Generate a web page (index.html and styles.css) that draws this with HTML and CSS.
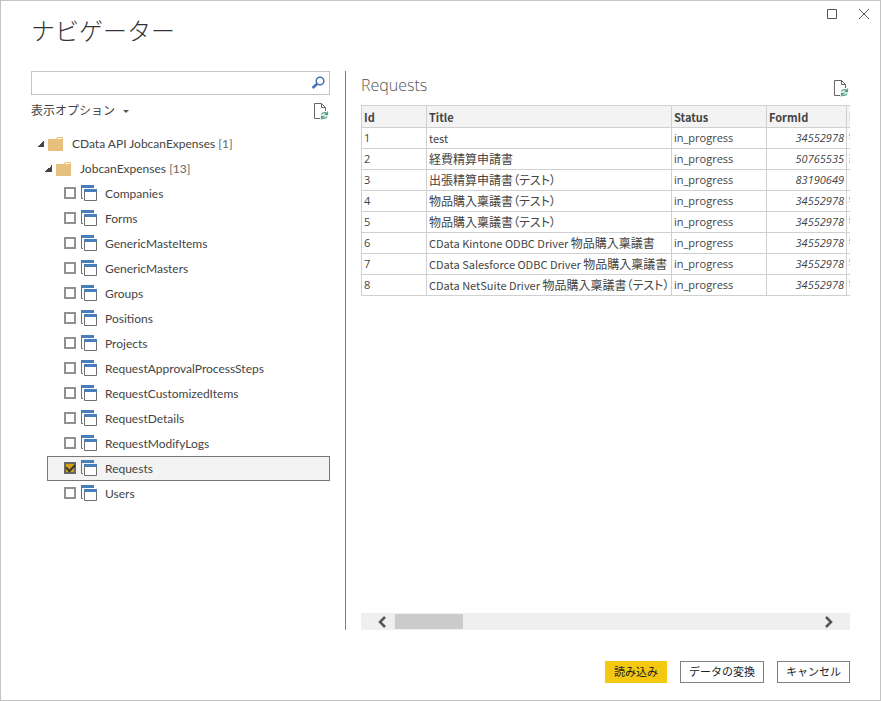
FILE: index.html
```html
<!DOCTYPE html>
<html lang="ja">
<head>
<meta charset="utf-8">
<meta name="viewport" content="width=device-width, initial-scale=1">
<title>ナビゲーター</title>
<link rel="stylesheet" href="styles.css">
</head>
<body>
<svg class="defs" aria-hidden="true">
  <symbol id="folder" viewBox="0 0 16 14">
    <path d="M0 2h7.500l1.500-2h6v14H0z" fill="#e8c07d"/>
    <path d="M9 1.500h5" stroke="#fff"/>
  </symbol>
  <symbol id="table" viewBox="0 0 17 17">
    <path d="M.5 3v10.500H2" fill="none" stroke="#6e6e6e"/>
    <path d="M0 0h13v3H0z" fill="#4a7ebb"/>
    <path d="M3.500 7v8.500h12V7" fill="#fff" stroke="#6e6e6e"/>
    <path d="M3 4h13v3H3z" fill="#4a7ebb"/>
  </symbol>
  <symbol id="refresh" viewBox="0 0 16 17">
    <path d="M6 15.500H.5V.5h7l4 4V8M7.500.5v4h4" fill="none" stroke="#666"/>
    <path d="M7.500 11.500c1-2.300 4-2.500 5.500-.8M13.500 8.500v3h-3M13 13.500c-1 2.300-4 2.500-5.500.8M7.500 16.500v-3h3" fill="none" stroke="#55a283" stroke-width="1.300"/>
  </symbol>
</svg>
<div class="window">
  <header class="titlebar">
    <h1>ナビゲーター</h1>
    <div class="controls">
      <button type="button" aria-label="最大化"><svg width="12" height="12" viewBox="0 0 12 12"><path d="M1.500 1.500h9v9h-9z"/></svg></button>
      <button type="button" aria-label="閉じる"><svg width="12" height="12" viewBox="0 0 12 12"><path d="M1 1l10 10M11 1L1 11"/></svg></button>
    </div>
  </header>

  <main class="panes">
    <section class="browse">
      <div class="search">
        <input type="text" aria-label="検索">
        <button type="button" aria-label="検索する"><svg width="14" height="14" viewBox="0 0 14 14"><circle cx="9" cy="5" r="3.800"/><path class="handle" d="M6.300 7.800L1.500 12"/></svg></button>
      </div>
      <div class="options">
        <button type="button">表示オプション<span class="caret"></span></button>
        <button type="button" aria-label="最新の情報に更新"><svg width="16" height="17"><use href="#refresh"/></svg></button>
      </div>

      <ul class="tree">
        <li>
          <div class="row level-1"><span class="twist"></span><svg width="16" height="14"><use href="#folder"/></svg><span>CData API JobcanExpenses <span class="count">[1]</span></span></div>
          <ul>
            <li>
              <div class="row level-2"><span class="twist"></span><svg width="16" height="14"><use href="#folder"/></svg><span>JobcanExpenses <span class="count">[13]</span></span></div>
              <ul class="items">
                <li><label class="item"><input type="checkbox"><svg width="17" height="17"><use href="#table"/></svg>Companies</label></li>
                <li><label class="item"><input type="checkbox"><svg width="17" height="17"><use href="#table"/></svg>Forms</label></li>
                <li><label class="item"><input type="checkbox"><svg width="17" height="17"><use href="#table"/></svg>GenericMasteItems</label></li>
                <li><label class="item"><input type="checkbox"><svg width="17" height="17"><use href="#table"/></svg>GenericMasters</label></li>
                <li><label class="item"><input type="checkbox"><svg width="17" height="17"><use href="#table"/></svg>Groups</label></li>
                <li><label class="item"><input type="checkbox"><svg width="17" height="17"><use href="#table"/></svg>Positions</label></li>
                <li><label class="item"><input type="checkbox"><svg width="17" height="17"><use href="#table"/></svg>Projects</label></li>
                <li><label class="item"><input type="checkbox"><svg width="17" height="17"><use href="#table"/></svg>RequestApprovalProcessSteps</label></li>
                <li><label class="item"><input type="checkbox"><svg width="17" height="17"><use href="#table"/></svg>RequestCustomizedItems</label></li>
                <li><label class="item"><input type="checkbox"><svg width="17" height="17"><use href="#table"/></svg>RequestDetails</label></li>
                <li><label class="item"><input type="checkbox"><svg width="17" height="17"><use href="#table"/></svg>RequestModifyLogs</label></li>
                <li><label class="item selected"><input type="checkbox" checked><svg width="17" height="17"><use href="#table"/></svg>Requests</label></li>
                <li><label class="item"><input type="checkbox"><svg width="17" height="17"><use href="#table"/></svg>Users</label></li>
              </ul>
            </li>
          </ul>
        </li>
      </ul>
    </section>

    <section class="preview">
      <div class="preview-head">
        <h2>Requests</h2>
        <button type="button" aria-label="プレビューを更新"><svg width="16" height="17"><use href="#refresh"/></svg></button>
      </div>
      <div class="grid">
        <table>
          <colgroup><col class="c-id"><col class="c-title"><col class="c-status"><col class="c-form"><col class="c-name"></colgroup>
          <thead><tr><th>Id</th><th>Title</th><th>Status</th><th>FormId</th><th>F</th></tr></thead>
          <tbody>
            <tr><td>1</td><td><div>test</div></td><td>in_progress</td><td class="num">34552978</td><td class="jp">物</td></tr>
            <tr><td>2</td><td><div><span class="jp">経費精算申請書</span></div></td><td>in_progress</td><td class="num">50765535</td><td class="jp">経</td></tr>
            <tr><td>3</td><td><div><span class="jp">出張精算申請書（テスト）</span></div></td><td>in_progress</td><td class="num">83190649</td><td class="jp">出</td></tr>
            <tr><td>4</td><td><div><span class="jp">物品購入稟議書（テスト）</span></div></td><td>in_progress</td><td class="num">34552978</td><td class="jp">物</td></tr>
            <tr><td>5</td><td><div><span class="jp">物品購入稟議書（テスト）</span></div></td><td>in_progress</td><td class="num">34552978</td><td class="jp">物</td></tr>
            <tr><td>6</td><td><div>CData Kintone ODBC Driver <span class="jp">物品購入稟議書</span></div></td><td>in_progress</td><td class="num">34552978</td><td class="jp">物</td></tr>
            <tr><td>7</td><td><div>CData Salesforce ODBC Driver <span class="jp">物品購入稟議書（テ</span></div></td><td>in_progress</td><td class="num">34552978</td><td class="jp">物</td></tr>
            <tr><td>8</td><td><div>CData NetSuite Driver <span class="jp">物品購入稟議書（テスト）</span></div></td><td>in_progress</td><td class="num">34552978</td><td class="jp">物</td></tr>
          </tbody>
        </table>
      </div>
      <div class="scrollbar">
        <button type="button" aria-label="左へスクロール"><svg width="10" height="12" viewBox="0 0 10 12"><path d="M8 1L3 6l5 5"/></svg></button>
        <div class="track"><div class="thumb"></div></div>
        <button type="button" aria-label="右へスクロール"><svg width="10" height="12" viewBox="0 0 10 12"><path d="M2 1l5 5-5 5"/></svg></button>
      </div>
    </section>
  </main>

  <footer class="actions">
    <button type="button" class="primary">読み込み</button>
    <button type="button">データの変換</button>
    <button type="button">キャンセル</button>
  </footer>
</div>
</body>
</html>
```
FILE: styles.css
```css
* {
  box-sizing: border-box;
}

body {
  margin: 0;
  color: #444;
  background: #fff;
  font: 12px/16px "Open Sans", "Noto Sans CJK JP", sans-serif;
}

h1, h2, ul {
  margin: 0;
  padding: 0;
  list-style: none;
}

button {
  display: flex;
  align-items: center;
  padding: 0;
  border: 0;
  background: none;
  color: inherit;
  font: inherit;
}

svg {
  flex: none;
}

.defs {
  display: none;
}

.window {
  display: flex;
  flex-direction: column;
  min-height: 100vh;
  padding: 0 30px 17px;
  border: 1px solid #c3c3c3;
}

.titlebar {
  display: flex;
  justify-content: space-between;
  align-items: flex-start;
  height: 70px;
}

.titlebar h1 {
  padding-top: 14px;
  color: #333;
  font-size: 24px;
  font-weight: 300;
  line-height: 32px;
}

.controls {
  display: flex;
  gap: 20px;
  margin: 7px -20px 0 0;
}

.controls path {
  fill: none;
  stroke: #555;
}

.panes {
  display: flex;
  flex: 1;
}

.browse {
  flex: none;
  width: 315px;
  padding-right: 15px;
  border-right: 1px solid #808080;
}

.search {
  display: flex;
  height: 24px;
  padding-right: 4px;
  border: 1px solid #c3c3c3;
}

.search input {
  flex: 1;
  min-width: 0;
  border: 0;
  outline: 0;
  font: inherit;
}

.search svg {
  fill: none;
  stroke: #3f72b5;
  stroke-width: 1.5;
}

.search .handle {
  stroke-width: 2.5;
}

.options {
  display: flex;
  justify-content: space-between;
  height: 36px;
  padding-bottom: 4px;
}

.caret {
  margin-left: 8px;
  border: 3px solid transparent;
  border-top-color: #555;
  border-bottom: 0;
}

.tree {
  font-family: Lato, "Open Sans", sans-serif;
}

.row, .item {
  display: flex;
  align-items: center;
  height: 25px;
}

.row svg {
  margin: 0 8px 0 4px;
}

.level-1 {
  padding-left: 6px;
}

.level-2 {
  padding-left: 14px;
}

.twist {
  width: 7px;
  height: 7px;
  background: linear-gradient(135deg, transparent 50%, #444 50%);
}

.count {
  color: #666;
}

.items {
  padding-left: 16px;
}

.item {
  padding-left: 16px;
  border: 1px solid transparent;
}

.item svg {
  margin: 0 7px 0 5px;
}

.item.selected {
  border-color: #777;
  background: #f3f3f3;
}

.item input {
  display: grid;
  place-items: center;
  flex: none;
  width: 12px;
  height: 12px;
  margin: 0 0 1px;
  border: 2px solid #919191;
  background: #fff;
  appearance: none;
}

.item input:checked {
  border-color: #666;
  background: #d2a015;
}

.item input:checked::after {
  content: "";
  width: 7px;
  height: 4px;
  border: solid #333;
  border-width: 0 0 2px 2px;
  transform: translateY(-1px) rotate(-45deg);
}

.preview {
  display: flex;
  flex: 1;
  flex-direction: column;
  min-width: 0;
  padding-left: 15px;
}

.preview-head {
  display: flex;
  justify-content: space-between;
  height: 34px;
}

.preview-head h2 {
  color: #555;
  font-size: 16px;
  font-weight: 300;
  line-height: 28px;
}

.grid {
  flex: 1;
  overflow: hidden;
}

.grid table {
  width: 586px;
  border: 1px solid #d0d0d0;
  border-width: 1px 0 0 1px;
  border-spacing: 0;
  table-layout: fixed;
  font-size: 11px;
}

.c-id { width: 65px; }
.c-title { width: 245px; }
.c-status { width: 95px; }
.c-form { width: 80px; }
.c-name { width: 100px; }

.grid th, .grid td {
  height: 21px;
  padding: 0 2px;
  border: 1px solid #d0d0d0;
  border-width: 0 1px 1px 0;
  text-align: left;
  white-space: nowrap;
}

.grid th {
  height: 22px;
  background: #f3f3f3;
  font-family: "Noto Sans CJK JP", sans-serif;
  line-height: 14px;
}

.grid td div {
  overflow: hidden;
  font-family: "Noto Sans CJK JP", sans-serif;
}

.grid .jp {
  font-size: 12px;
  font-feature-settings: "palt";
}

.grid .num {
  font-style: italic;
  text-align: right;
}

.scrollbar {
  display: flex;
  height: 17px;
  padding: 0 16px;
  background: #efefef;
}

.scrollbar path {
  fill: none;
  stroke: #555;
  stroke-width: 2.5;
}

.track {
  flex: 1;
  padding: 1px 8px;
}

.thumb {
  width: 68px;
  height: 15px;
  background: #cbcbcb;
}

.actions {
  display: flex;
  justify-content: flex-end;
  gap: 13px;
  padding-top: 31px;
}

.actions button {
  height: 22px;
  padding: 0 8px;
  border: 1px solid #808080;
  color: #222;
  font-size: 11px;
}

.actions .primary {
  border-color: #f2c811;
  background: #f2c811;
}
```
